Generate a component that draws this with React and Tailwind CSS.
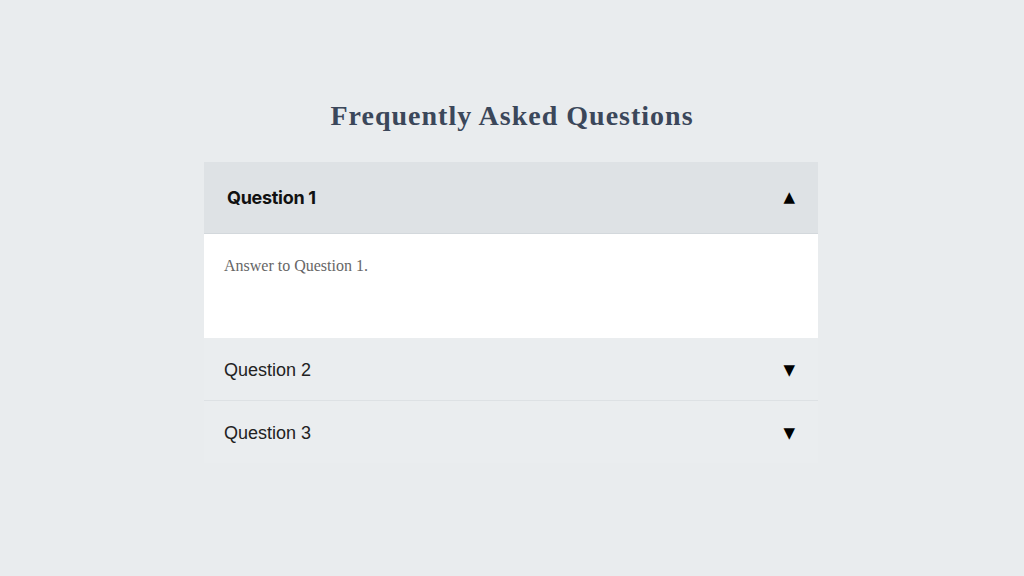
import { useState } from 'react';

const faqs = [
  { q: 'Question 1', a: 'Answer to Question 1.' },
  { q: 'Question 2', a: 'Answer to Question 2.' },
  { q: 'Question 3', a: 'Answer to Question 3.' },
];

export default function App() {
  const [open, setOpen] = useState(0);

  return (
    <div className="min-h-screen w-full bg-[#e9ecee] flex flex-col items-center pt-[96px]">
      <h1
        className="text-[28px] font-bold text-[#3b475a] tracking-[1px] leading-[40px]"
        style={{ fontFamily: "'Liberation Serif', serif" }}
      >
        Frequently Asked Questions
      </h1>

      <div className="w-[614px] mt-[26px] mr-[2px]">
        {faqs.map((item, i) => {
          const isOpen = open === i;
          return (
            <div key={item.q} className={i > 0 && !isOpen && open !== i - 1 ? 'border-t border-[#dde1e4]' : ''}>
              <button
                onClick={() => setOpen(isOpen ? -1 : i)}
                className={`w-full flex items-center justify-between pl-[20px] pr-[23px] text-left ${
                  isOpen ? 'h-[72px] bg-[#dee2e5] border-b border-[#d3d8dc]' : 'h-[62px] bg-[#eaedef] pt-[2px]'
                }`}
              >
                <span
                  className={
                    isOpen
                      ? 'text-[18px] font-bold text-[#111] tracking-[-0.3px] pl-[3px]'
                      : 'text-[18px] text-[#222]'
                  }
                  style={{ fontFamily: isOpen ? "Inter, sans-serif" : "'Liberation Sans', Arial, sans-serif" }}
                >
                  {item.q}
                </span>
                <span className="text-[15px] text-black leading-none" style={{ fontFamily: "'DejaVu Sans', sans-serif" }}>
                  {isOpen ? '▲' : '▼'}
                </span>
              </button>
              {isOpen && (
                <div className="bg-white h-[104px] px-[20px] pt-[20px]">
                  <p
                    className="text-[16px] text-[#666]"
                    style={{ fontFamily: "'Liberation Serif', serif" }}
                  >
                    {item.a}
                  </p>
                </div>
              )}
            </div>
          );
        })}
      </div>
    </div>
  );
}
